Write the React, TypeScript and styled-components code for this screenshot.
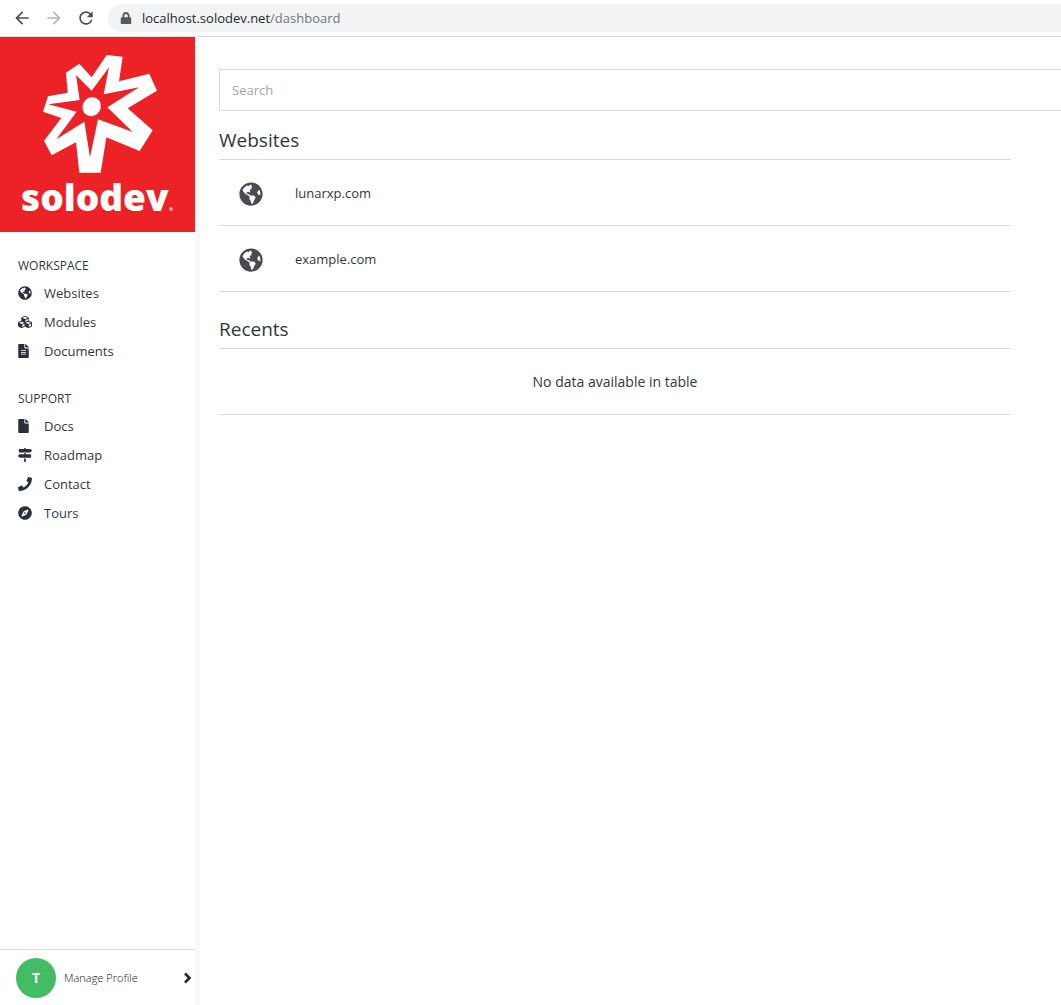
import React from "react";
import styled, { createGlobalStyle } from "styled-components";
import {
  FaGlobeAmericas,
  FaCubes,
  FaFileAlt,
  FaFile,
  FaLock,
  FaMapSigns,
  FaPhone,
  FaCompass,
} from "react-icons/fa";
import { MdArrowBack, MdArrowForward, MdRefresh } from "react-icons/md";

const GlobalStyle = createGlobalStyle`
  *, *::before, *::after { box-sizing: border-box; }
  body {
    margin: 0;
    background: #fff;
    color: #32373d;
    font: 400 13px/20px "Open Sans", "Noto Sans", sans-serif;
  }
`;

const Page = styled.div`
  display: flex;
  flex-direction: column;
  min-height: 100vh;
`;

const BrowserBar = styled.header`
  display: flex;
  align-items: center;
  height: 37px;
  padding-left: 12px;
  gap: 12px;
  border-bottom: 1px solid #dadcde;
`;

const BarButton = styled.button`
  display: flex;
  padding: 0;
  border: 0;
  background: none;
  color: #4b4f54;
  font-size: 20px;
  &:disabled { color: #b4b6b8; }
`;

const AddressBar = styled.div`
  display: flex;
  flex: 1;
  align-items: center;
  gap: 10px;
  height: 28px;
  padding-left: 12px;
  border-radius: 14px 0 0 14px;
  background: #f1f3f4;
  color: #55595e;
`;

const Address = styled.span`
  color: #72767a;
  b { font-weight: 400; color: #24272a; }
`;

const Body = styled.div`
  display: flex;
  flex: 1;
`;

const Sidebar = styled.aside`
  display: flex;
  flex-direction: column;
  flex: 0 0 200px;
  border-right: 5px solid #f8f8f8;
`;

const LogoLink = styled.a`
  display: block;
  background: #ec2227;
  svg { display: block; width: 100%; }
`;

const Nav = styled.nav`
  display: flex;
  flex-direction: column;
  flex: 1;
  gap: 24px;
  padding: 24px 18px;
`;

const NavTitle = styled.h2`
  margin: 0 0 3px;
  font-size: 12px;
  line-height: 19px;
  font-weight: 400;
`;

const NavList = styled.ul`
  margin: 0;
  padding: 0;
  list-style: none;
`;

const NavLink = styled.a`
  display: flex;
  align-items: center;
  gap: 12px;
  height: 29px;
  color: inherit;
  text-decoration: none;
  svg { color: #2b3038; }
`;

const NavIcon = styled.span<{ $narrow?: boolean }>`
  display: flex;
  width: 14px;
  font-size: 14px;
  svg { width: ${(p) => (p.$narrow ? "11px" : "14px")}; }
`;

const Profile = styled.a`
  display: flex;
  align-items: center;
  gap: 8px;
  height: 56px;
  padding: 0 3px 0 16px;
  border-top: 1px solid #d9dbdd;
  color: #111417;
  font-size: 11px;
  font-weight: 300;
  text-decoration: none;
  svg { margin-left: auto; color: #24272c; }
`;

const Avatar = styled.span`
  display: grid;
  place-items: center;
  width: 40px;
  height: 40px;
  border-radius: 50%;
  background: #43bc63;
  color: #fff;
  font-size: 14px;
  font-weight: 700;
`;

const Main = styled.main`
  flex: 1;
  min-width: 0;
  padding: 32px 0 32px 19px;
`;

const SearchInput = styled.input`
  display: block;
  width: 100%;
  height: 42px;
  padding: 0 12px;
  border: 1px solid #d9dbdd;
  border-right: 0;
  border-radius: 0;
  color: inherit;
  font: inherit;
  &::placeholder { color: #a4a6a8; opacity: 1; }
`;

const Section = styled.section`
  margin: 16px 50px 24px 0;
`;

const SectionTitle = styled.h1`
  margin: 0;
  padding-bottom: 5px;
  font-size: 19px;
  line-height: 27px;
  font-weight: 400;
`;

const Table = styled.table`
  width: 100%;
  border-collapse: collapse;
  border-top: 1px solid #d9dbdd;
`;

const Row = styled.tr`
  height: 66px;
  border-bottom: 1px solid #d9dbdd;
`;

const IconCell = styled.td`
  width: 76px;
  padding: 2px 20px 0;
  color: #494a52;
  svg { display: block; font-size: 24px; }
`;

const Cell = styled.td`
  padding: 0;
  a { color: inherit; text-decoration: none; }
`;

const EmptyCell = styled.td`
  padding: 0;
  font-size: 14px;
  text-align: center;
`;

const Logo = () => (
  <svg viewBox="0 0 195 195" role="img" aria-label="solodev">
    <g transform="translate(30 13) scale(0.33333)">
      <path
        fill="#fff"
        d="M230 15 278 20 267 94 358 71 381 122 293 175 368 241 329 303 229 262 212 368H148L138 277 65 316 42 272 94 204 39 185 54 139 113 128 108 68 148 41 185 82Z"
      />
      <path
        fill="#ec2227"
        d="M237 52 221 133 327 112 232 172 308 246 204 208 180 322 163 215 79 268 140 185 55 163 149 150 138 75 185 122Z"
      />
      <ellipse cx="185" cy="170" rx="27" ry="29" fill="#fff" transform="rotate(30 185 170)" />
    </g>
    <text x="21" y="174" fill="#fff" fontFamily="Open Sans, sans-serif" fontWeight="800" fontSize="37">
      solodev
    </text>
    <circle cx="171" cy="172" r="2" fill="#f7a3a5" />
  </svg>
);

const Chevron = () => (
  <svg width="9" height="12" viewBox="0 0 9 12" aria-hidden="true">
    <path d="M2 1.5 6.5 6 2 10.5" fill="none" stroke="currentColor" strokeWidth="2.6" />
  </svg>
);

const groups = [
  {
    title: "WORKSPACE",
    items: [
      { label: "Websites", icon: <FaGlobeAmericas /> },
      { label: "Modules", icon: <FaCubes /> },
      { label: "Documents", icon: <FaFileAlt />, narrow: true },
    ],
  },
  {
    title: "SUPPORT",
    items: [
      { label: "Docs", icon: <FaFile />, narrow: true },
      { label: "Roadmap", icon: <FaMapSigns /> },
      { label: "Contact", icon: <FaPhone /> },
      { label: "Tours", icon: <FaCompass /> },
    ],
  },
];

const sites = ["lunarxp.com", "example.com"];

export default function App() {
  return (
    <Page>
      <GlobalStyle />
      <BrowserBar>
        <BarButton aria-label="Back"><MdArrowBack /></BarButton>
        <BarButton aria-label="Forward" disabled><MdArrowForward /></BarButton>
        <BarButton aria-label="Reload"><MdRefresh /></BarButton>
        <AddressBar>
          <FaLock size={12} />
          <Address><b>localhost.solodev.net</b>/dashboard</Address>
        </AddressBar>
      </BrowserBar>
      <Body>
        <Sidebar>
          <LogoLink href="#"><Logo /></LogoLink>
          <Nav>
            {groups.map((group) => (
              <div key={group.title}>
                <NavTitle>{group.title}</NavTitle>
                <NavList>
                  {group.items.map((item) => (
                    <li key={item.label}>
                      <NavLink href="#">
                        <NavIcon $narrow={item.narrow}>{item.icon}</NavIcon>
                        {item.label}
                      </NavLink>
                    </li>
                  ))}
                </NavList>
              </div>
            ))}
          </Nav>
          <Profile href="#">
            <Avatar>T</Avatar>
            Manage Profile
            <Chevron />
          </Profile>
        </Sidebar>
        <Main>
          <SearchInput type="search" placeholder="Search" aria-label="Search" />
          <Section>
            <SectionTitle>Websites</SectionTitle>
            <Table>
              <tbody>
                {sites.map((site) => (
                  <Row key={site}>
                    <IconCell><FaGlobeAmericas /></IconCell>
                    <Cell><a href="#">{site}</a></Cell>
                  </Row>
                ))}
              </tbody>
            </Table>
          </Section>
          <Section>
            <SectionTitle>Recents</SectionTitle>
            <Table>
              <tbody>
                <Row><EmptyCell>No data available in table</EmptyCell></Row>
              </tbody>
            </Table>
          </Section>
        </Main>
      </Body>
    </Page>
  );
}
